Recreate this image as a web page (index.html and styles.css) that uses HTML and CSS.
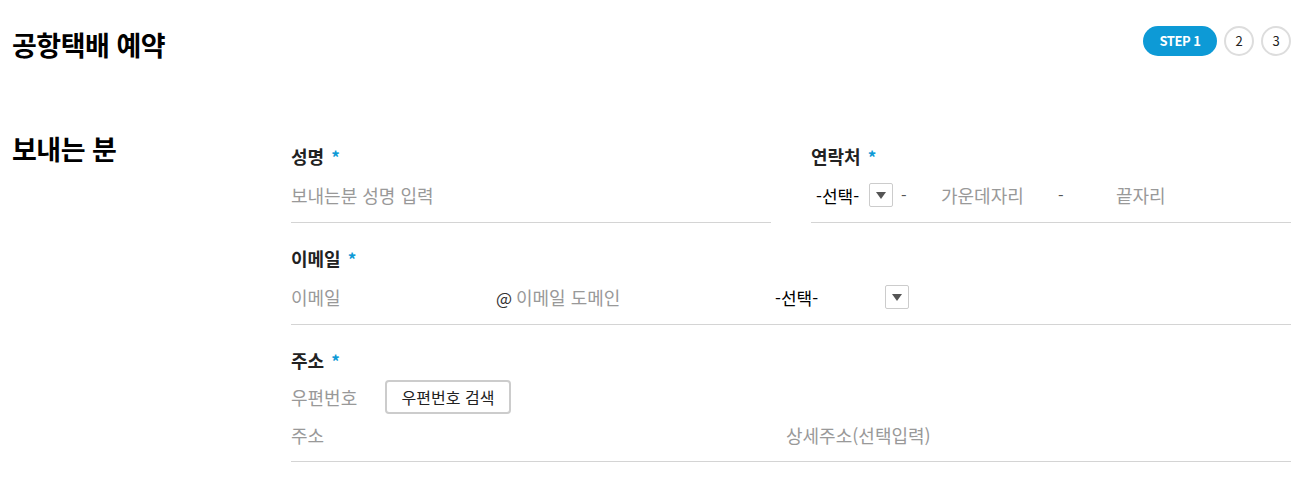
FILE: index.html
```html
<!DOCTYPE html>
<html lang="ko">
<head>
  <meta charset="UTF-8">
  <title>공항택배 예약</title>
  <link rel="stylesheet" href="styles.css">
</head>
<body>
  <header class="page-head">
    <h1>공항택배 예약</h1>
    <ol class="steps">
      <li class="step active">STEP 1</li>
      <li class="step">2</li>
      <li class="step">3</li>
    </ol>
  </header>

  <section class="sender">
    <h2>보내는 분</h2>
    <div class="form">
      <div class="row two">
        <div class="field">
          <label class="label">성명 <span class="req">*</span></label>
          <div class="inputs">
            <input class="text name" type="text" placeholder="보내는분 성명 입력">
          </div>
        </div>
        <div class="field">
          <label class="label">연락처 <span class="req">*</span></label>
          <div class="inputs phone">
            <div class="select">
              <span class="sel-text">-선택-</span>
              <span class="arrow"></span>
            </div>
            <span class="dash">-</span>
            <input class="text mid" type="text" placeholder="가운데자리">
            <span class="dash wide">-</span>
            <input class="text last" type="text" placeholder="끝자리">
          </div>
        </div>
      </div>

      <div class="row">
        <div class="field">
          <label class="label">이메일 <span class="req">*</span></label>
          <div class="inputs">
            <input class="text email" type="text" placeholder="이메일">
            <span class="at">@</span>
            <input class="text domain" type="text" placeholder="이메일 도메인">
            <div class="select wide">
              <span class="sel-text">-선택-</span>
              <span class="arrow"></span>
            </div>
          </div>
        </div>
      </div>

      <div class="row">
        <div class="field address">
          <label class="label">주소 <span class="req">*</span></label>
          <div class="inputs">
            <input class="text zip" type="text" placeholder="우편번호">
            <button class="zip-btn" type="button">우편번호 검색</button>
          </div>
          <div class="inputs">
            <input class="text addr" type="text" placeholder="주소">
            <input class="text detail" type="text" placeholder="상세주소(선택입력)">
          </div>
        </div>
      </div>
    </div>
  </section>
</body>
</html>
```

FILE: styles.css
```css
body {
  margin: 0;
  padding: 0 14px 0 12px;
  font-family: "Noto Sans CJK KR", "Noto Sans", sans-serif;
  color: #222;
  background: #fff;
}
.page-head {
  display: flex;
  justify-content: space-between;
  align-items: center;
  height: 88px;
}
.page-head h1 {
  margin: 0;
  font-size: 27px;
  font-weight: 700;
  color: #000;
  letter-spacing: -0.5px;
}
.steps {
  display: flex;
  gap: 7px;
  list-style: none;
  margin: 0;
  padding: 0;
  margin-top: -6px;
}
.step {
  width: 26px;
  height: 26px;
  border: 2px solid #ddd;
  border-radius: 50%;
  font-size: 13px;
  line-height: 26px;
  text-align: center;
  color: #222;
}
.step.active {
  width: 74px;
  height: 30px;
  border: none;
  border-radius: 15px;
  background-color: #0d9ad6;
  color: #fff;
  font-weight: 700;
  line-height: 30px;
  font-size: 13px;
  letter-spacing: -0.5px;
}
.sender {
  display: flex;
  margin-top: 44px;
}
.sender h2 {
  width: 279px;
  flex-shrink: 0;
  margin: 0;
  font-size: 27px;
  font-weight: 700;
  color: #000;
  letter-spacing: -0.5px;
  line-height: 34px;
}
.form {
  flex: 1;
}
.row.two {
  display: grid;
  grid-template-columns: 1fr 1fr;
  gap: 40px;
}
.field {
  border-bottom: 1px solid #d4d4d4;
  padding-top: 12px;
  padding-bottom: 8px;
  margin-bottom: 11px;
}
.label {
  display: block;
  font-size: 18px;
  font-weight: 700;
  color: #222;
  line-height: 24px;
  margin-bottom: 7px;
}
.address .label {
  margin-bottom: 5px;
}
.address .inputs + .inputs {
  height: 37px;
}
.req {
  color: #0d9ad6;
  font-size: 17px;
  margin-left: 2px;
}
.inputs {
  display: flex;
  align-items: center;
  height: 38px;
}
.text {
  border: none;
  outline: none;
  padding: 0;
  font-family: inherit;
  font-size: 18px;
  color: #222;
  background: transparent;
}
.text::placeholder {
  color: #999;
}
.name {
  width: 100%;
}
.phone .select {
  margin-left: 5px;
}
.select {
  display: flex;
  align-items: center;
  font-size: 17px;
  color: #000;
}
.sel-text {
  width: 53px;
}
.select.wide .sel-text {
  width: 110px;
}
.arrow {
  position: relative;
  width: 22px;
  height: 22px;
  border: 1px solid #ccc;
  border-radius: 2px;
}
.arrow::after {
  content: "";
  position: absolute;
  left: 6px;
  top: 8px;
  border-left: 5px solid transparent;
  border-right: 5px solid transparent;
  border-top: 7px solid #555;
}
.dash {
  width: 40px;
  margin-left: 8px;
  font-size: 16px;
  color: #555;
}
.dash.wide {
  width: 58px;
  margin-left: 0;
}
.mid {
  width: 117px;
}
.last {
  width: 100px;
}
.email {
  width: 205px;
}
.at {
  width: 20px;
  font-size: 17px;
  color: #333;
}
.domain {
  width: 259px;
}
.zip {
  width: 94px;
}
.zip-btn {
  width: 126px;
  height: 34px;
  padding: 0;
  font-family: inherit;
  font-size: 16px;
  color: #222;
  background: #fff;
  border: 2px solid #ccc;
  border-radius: 4px;
  cursor: pointer;
}
.addr {
  width: 495px;
}
.detail {
  width: 200px;
}
```
